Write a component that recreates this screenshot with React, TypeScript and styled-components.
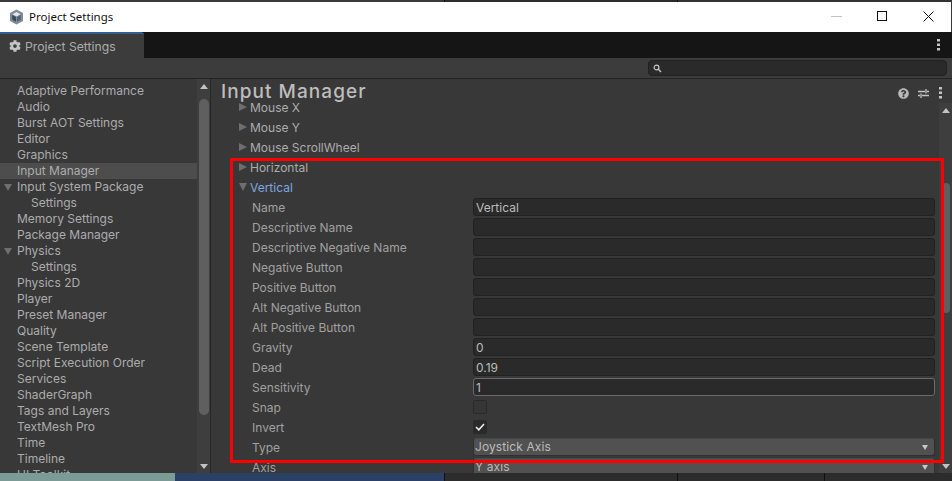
import React from "react";
import styled, { createGlobalStyle } from "styled-components";
import { FaCog, FaQuestionCircle } from "react-icons/fa";

const Global = createGlobalStyle`
  html, body { margin: 0; padding: 0; background: #383838; }
  * { box-sizing: border-box; }
`;

const Page = styled.div`
  width: 952px; height: 481px; overflow: hidden; display: flex; flex-direction: column;
  font-family: Inter, "Noto Sans", sans-serif; font-size: 12px; color: #acacac;
`;
const Strip = styled.div<{ $h: number }>`
  height: ${p => p.$h}px; flex: none; display: flex;
`;
const Seg = styled.div<{ $w: number; $bg: string }>`
  width: ${p => p.$w}px; background: ${p => p.$bg}; flex: none;
`;
const TitleBar = styled.div`
  height: 30px; flex: none; background: #fff; display: flex; align-items: center;
  padding-left: 9px; margin-right: 1px;
`;
const TitleText = styled.span`
  font-family: "Noto Sans", sans-serif; font-size: 11.5px; color: #111; margin-left: 5px; flex: 1;
  padding-bottom: 2px;
`;
const WinBtn = styled.div`
  width: 46px; height: 30px; display: flex; align-items: center; justify-content: center;
  padding-bottom: 2px;
`;
const TabBar = styled.div`
  height: 26px; flex: none; background: #151515; display: flex; justify-content: space-between;
  align-items: center; padding-right: 11px;
`;
const Tab = styled.div`
  width: 144px; height: 26px; background: #3c3c3c; border-top: 2px solid #2f5f93;
  border-top-right-radius: 3px; display: flex; align-items: center; gap: 4px; padding-left: 9px;
  color: #acacac; font-size: 12.2px;
`;
const Toolbar = styled.div`
  height: 21px; flex: none; background: #3c3c3c; border-bottom: 1px solid #232323;
  display: flex; justify-content: flex-end; align-items: flex-start; padding: 2px 5px 0 0;
`;
const Search = styled.div`
  width: 299px; height: 16px; background: #2a2a2a; border: 1px solid #212121; border-radius: 4px;
  display: flex; align-items: center; padding-left: 4px;
`;
const Body = styled.div`
  flex: 1; min-height: 0; display: flex; background: #383838;
`;
const Sidebar = styled.div`
  width: 211px; flex: none; display: flex; border-right: 1px solid #272727;
`;
const NavList = styled.div`
  flex: 1; padding-top: 4px; overflow: hidden;
`;
const NavItem = styled.div<{ $indent?: boolean; $selected?: boolean }>`
  height: 16px; line-height: 16px; white-space: nowrap; position: relative;
  padding-left: ${p => (p.$indent ? 31 : 17)}px;
  background: ${p => (p.$selected ? "#4d4d4d" : "transparent")};
`;
const NavArrow = styled.span`
  position: absolute; left: 4px; top: 5px; width: 0; height: 0;
  border-left: 4px solid transparent; border-right: 4px solid transparent; border-top: 7px solid #6e6e6e;
`;
const Track = styled.div<{ $w: number; $top?: number }>`
  width: ${p => p.$w}px; flex: none; margin-top: ${p => p.$top ?? 0}px; background: #3e3e3e;
  display: flex; flex-direction: column; align-items: center; position: relative;
  padding: 5px 0 4px;
`;
const Up = styled.span`
  width: 0; height: 0; flex: none; border-left: 4px solid transparent; border-right: 4px solid transparent;
  border-bottom: 5px solid #c2c2c2;
`;
const Down = styled(Up)`
  border-bottom: 0; border-top: 5px solid #c2c2c2; margin-top: auto;
`;
const Thumb = styled.div<{ $top: number; $h: number; $w: number }>`
  width: ${p => p.$w}px; height: ${p => p.$h}px; margin-top: ${p => p.$top}px;
  background: #5f5f5f; border-radius: 5px; flex: none;
`;
const Main = styled.div`
  flex: 1; min-width: 0; display: flex; flex-direction: column; position: relative;
`;
const Header = styled.div`
  height: 18px; flex: none; display: flex; justify-content: space-between; padding: 0 9px 0 10px;
  position: relative; z-index: 1;
`;
const Title = styled.div`
  font-size: 19px; font-weight: 500; line-height: 26px; color: #bdbdbd; letter-spacing: 1.05px;
`;
const HeaderIcons = styled.div`
  display: flex; align-items: center; gap: 9px; height: 28px;
`;
const Content = styled.div`
  flex: 1; min-height: 0; display: flex;
`;
const List = styled.div`
  flex: 1; min-width: 0; overflow: hidden; padding-right: 4px;
`;
const Foldout = styled.div<{ $active?: boolean }>`
  height: 20px; display: flex; align-items: center; padding-left: 28px; gap: 3px;
  color: ${p => (p.$active ? "#7ba6e0" : "#acacac")};
`;
const ArrowRight = styled.span`
  width: 0; height: 0; flex: none; border-top: 4.5px solid transparent; border-bottom: 4.5px solid transparent;
  border-left: 8px solid #6e6e6e;
`;
const ArrowDown = styled.span`
  width: 0; height: 0; flex: none; border-left: 4px solid transparent; border-right: 4px solid transparent;
  border-top: 8px solid #6e6e6e;
`;
const Row = styled.div`
  height: 20px; display: flex; align-items: center; padding-left: 41px;
`;
const Label = styled.div`
  width: 221px; flex: none; color: #a0a0a0; white-space: nowrap;
`;
const Field = styled.div<{ $focus?: boolean }>`
  flex: 1; height: 18px; background: #2a2a2a; border: 1px solid ${p => (p.$focus ? "#6a6a6a" : "#212121")};
  border-radius: 3px; line-height: 18px; padding-left: 2px; color: #bcbcbc;
`;
const Check = styled.div<{ $on?: boolean }>`
  width: 14px; height: 14px; border-radius: 2px; border: 1px solid #2a2a2a;
  background: ${p => (p.$on ? "#2a2a2a" : "#363636")};
  display: flex; align-items: center; justify-content: center;
`;
const Select = styled.div`
  flex: 1; height: 18px; background: #515151; border: 1px solid #303030; border-top-color: #484848;
  border-radius: 3px; line-height: 16px; padding: 0 6px 0 1px; color: #bcbcbc; letter-spacing: 0.1px;
  display: flex; justify-content: space-between; align-items: center;
`;
const Caret = styled.span`
  width: 0; height: 0; border-left: 3.5px solid transparent; border-right: 3.5px solid transparent;
  border-top: 5px solid #c8c8c8;
`;
const Highlight = styled.div`
  position: absolute; left: 19px; top: 79px; width: 714px; height: 305px;
  border: 3px solid #f00; pointer-events: none; z-index: 2;
`;

const Kebab = () => (
  <svg width="5" height="12" viewBox="0 0 5 12">
    <rect x="1" y="0" width="3" height="2.5" fill="#c4c4c4" />
    <rect x="1" y="4.5" width="3" height="2.5" fill="#c4c4c4" />
    <rect x="1" y="9" width="3" height="2.5" fill="#c4c4c4" />
  </svg>
);

const nav: { t: string; indent?: boolean; arrow?: boolean; sel?: boolean }[] = [
  { t: "Adaptive Performance" }, { t: "Audio" }, { t: "Burst AOT Settings" }, { t: "Editor" }, { t: "Graphics" },
  { t: "Input Manager", sel: true }, { t: "Input System Package", arrow: true }, { t: "Settings", indent: true },
  { t: "Memory Settings" }, { t: "Package Manager" }, { t: "Physics", arrow: true }, { t: "Settings", indent: true },
  { t: "Physics 2D" }, { t: "Player" }, { t: "Preset Manager" }, { t: "Quality" }, { t: "Scene Template" },
  { t: "Script Execution Order" }, { t: "Services" }, { t: "ShaderGraph" }, { t: "Tags and Layers" },
  { t: "TextMesh Pro" }, { t: "Time" }, { t: "Timeline" }, { t: "UI Toolkit" },
];

const fields: [string, string?, boolean?][] = [
  ["Name", "Vertical"], ["Descriptive Name"], ["Descriptive Negative Name"], ["Negative Button"], ["Positive Button"],
  ["Alt Negative Button"], ["Alt Positive Button"], ["Gravity", "0"], ["Dead", "0.19"], ["Sensitivity", "1", true],
];

export default function App() {
  return (
    <Page>
      <Global />
      <Strip $h={2}>
        <Seg $w={444} $bg="#3a3a3a" /><Seg $w={1} $bg="#111" /><Seg $w={232} $bg="#2c2c2c" /><Seg $w={1} $bg="#111" /><Seg $w={274} $bg="#333" />
      </Strip>
      <TitleBar>
        <svg width="15" height="16" viewBox="0 0 15 16">
          <path d="M7.5 0.5 L14 4 V12 L7.5 15.5 L1 12 V4 Z" fill="#7d8d9c" />
          <path d="M7.5 3 L11.5 5.2 L7.5 7.4 L3.5 5.2 Z" fill="#e3e8ec" />
          <path d="M3.2 6 L7 8.1 V12.8 L3.2 10.7 Z" fill="#3d4a57" />
          <path d="M11.8 6 L8 8.1 V12.8 L11.8 10.7 Z" fill="#56646f" />
        </svg>
        <TitleText>Project Settings</TitleText>
        <WinBtn>
          <svg width="11" height="2" viewBox="0 0 11 2"><rect y="1" width="11" height="1" fill="#c2c2c2" /></svg>
        </WinBtn>
        <WinBtn>
          <svg width="10" height="10" viewBox="0 0 10 10"><rect x="0.5" y="0.5" width="9" height="9" fill="none" stroke="#111" /></svg>
        </WinBtn>
        <WinBtn>
          <svg width="11" height="11" viewBox="0 0 11 11"><path d="M0.5 0.5 L10.5 10.5 M10.5 0.5 L0.5 10.5" stroke="#111" fill="none" /></svg>
        </WinBtn>
      </TitleBar>
      <TabBar>
        <Tab>
          <FaCog size={12} color="#c4c4c4" />
          Project Settings
        </Tab>
        <Kebab />
      </TabBar>
      <Toolbar>
        <Search>
          <svg width="9" height="9" viewBox="0 0 9 9">
            <circle cx="3.5" cy="3.5" r="2.4" fill="none" stroke="#c4c4c4" strokeWidth="1.2" />
            <path d="M5.3 5.3 L8 8" stroke="#c4c4c4" strokeWidth="1.4" />
          </svg>
        </Search>
      </Toolbar>
      <Body>
        <Sidebar>
          <NavList>
            {nav.map((n, i) => (
              <NavItem key={i} $indent={n.indent} $selected={n.sel}>
                {n.arrow && <NavArrow />}
                {n.t}
              </NavItem>
            ))}
          </NavList>
          <Track $w={13}>
            <Up />
            <Thumb $w={10} $top={10} $h={316} />
            <Down />
          </Track>
        </Sidebar>
        <Main>
          <Header>
            <Title>Input Manager</Title>
            <HeaderIcons>
              <FaQuestionCircle size={11} color="#b8b8b8" />
              <svg width="11" height="11" viewBox="0 0 11 11">
                <path d="M0 3.5 H7 M9 3.5 H11 M8 1 V5.5 M0 7.5 H2 M4 7.5 H11 M3 5.5 V10" stroke="#c4c4c4" strokeWidth="1.3" fill="none" />
              </svg>
              <Kebab />
            </HeaderIcons>
          </Header>
          <Content>
            <List>
              {["Mouse X", "Mouse Y", "Mouse ScrollWheel", "Horizontal"].map(t => (
                <Foldout key={t}><ArrowRight />{t}</Foldout>
              ))}
              <Foldout $active><ArrowDown />Vertical</Foldout>
              {fields.map(([l, v, f]) => (
                <Row key={l}><Label>{l}</Label><Field $focus={f}>{v}</Field></Row>
              ))}
              <Row><Label>Snap</Label><Check /></Row>
              <Row>
                <Label>Invert</Label>
                <Check $on>
                  <svg width="10" height="8" viewBox="0 0 10 8"><path d="M1 4 L3.8 6.8 L9 1" fill="none" stroke="#eee" strokeWidth="1.6" /></svg>
                </Check>
              </Row>
              <Row><Label>Type</Label><Select>Joystick Axis<Caret /></Select></Row>
              <Row><Label>Axis</Label><Select>Y axis<Caret /></Select></Row>
            </List>
            <Track $w={13} $top={6}>
              <Up />
              <Thumb $w={8} $top={70} $h={130} />
              <Down />
            </Track>
          </Content>
          <Highlight />
        </Main>
      </Body>
      <Strip $h={8}>
        <Seg $w={175} $bg="#7c9a96" /><Seg $w={269} $bg="#2a4165" /><Seg $w={1} $bg="#111" /><Seg $w={232} $bg="#2c2c2c" /><Seg $w={1} $bg="#111" /><Seg $w={146} $bg="#2c2c2c" /><Seg $w={1} $bg="#111" /><Seg $w={127} $bg="#2c2c2c" />
      </Strip>
    </Page>
  );
}
